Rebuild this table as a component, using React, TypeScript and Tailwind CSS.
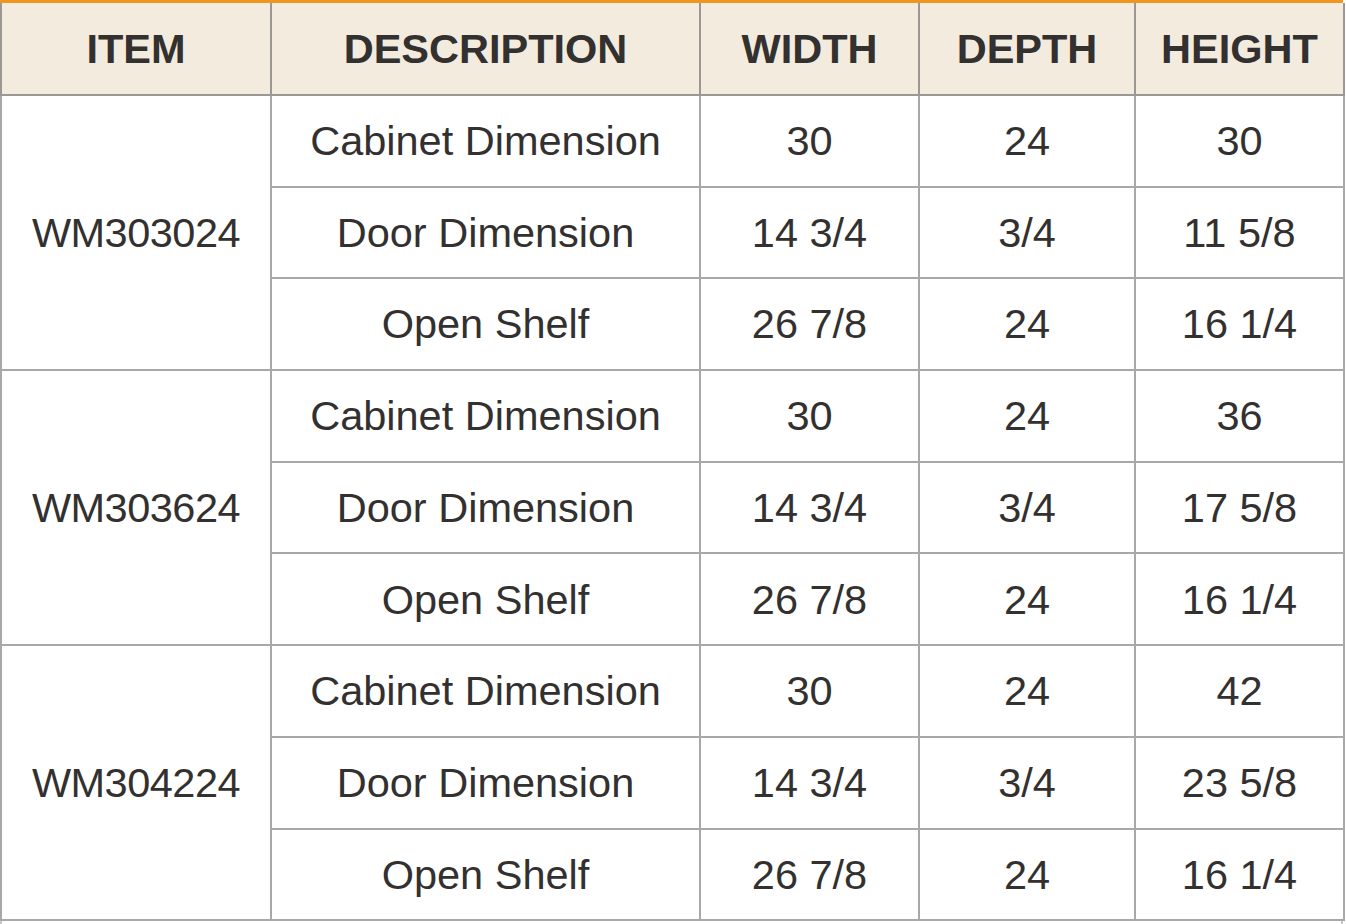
const rows = [
  {
    item: 'WM303024',
    lines: [
      ['Cabinet Dimension', '30', '24', '30'],
      ['Door Dimension', '14 3/4', '3/4', '11 5/8'],
      ['Open Shelf', '26 7/8', '24', '16 1/4'],
    ],
  },
  {
    item: 'WM303624',
    lines: [
      ['Cabinet Dimension', '30', '24', '36'],
      ['Door Dimension', '14 3/4', '3/4', '17 5/8'],
      ['Open Shelf', '26 7/8', '24', '16 1/4'],
    ],
  },
  {
    item: 'WM304224',
    lines: [
      ['Cabinet Dimension', '30', '24', '42'],
      ['Door Dimension', '14 3/4', '3/4', '23 5/8'],
      ['Open Shelf', '26 7/8', '24', '16 1/4'],
    ],
  },
]

const headers = ['ITEM', 'DESCRIPTION', 'WIDTH', 'DEPTH', 'HEIGHT']

export default function App() {
  return (
    <div
      className="w-[1346px] h-[924px] overflow-hidden bg-white text-[#333030]"
      style={{ fontFamily: '"Liberation Sans", Arial, sans-serif' }}
    >
      <div className="w-[1343px] h-[3px] bg-[#f0951f]" />
      <table className="table-fixed border-collapse w-[1343px]">
        <colgroup>
          <col className="w-[270px]" />
          <col className="w-[429px]" />
          <col className="w-[219px]" />
          <col className="w-[216px]" />
          <col className="w-[209px]" />
        </colgroup>
        <thead>
          <tr className="h-[92px] bg-[#f3ebde]">
            {headers.map((h) => (
              <th
                key={h}
                className="border-2 border-t-0 border-[#9a9794] text-[41.5px] font-bold text-center align-middle p-0 leading-none"
              >
                {h}
              </th>
            ))}
          </tr>
        </thead>
        <tbody>
          {rows.map((group) =>
            group.lines.map((line, i) => (
              <tr key={group.item + i} className="h-[91.7px]">
                {i === 0 && (
                  <td
                    rowSpan={3}
                    className="border-2 border-[#a8a8a8] text-[41.5px] text-center align-middle p-0 leading-none tracking-[-0.5px]"
                  >
                    {group.item}
                  </td>
                )}
                {line.map((cell, j) => (
                  <td
                    key={j}
                    className="border-2 border-[#a8a8a8] text-[41.5px] text-center align-middle p-0 leading-none"
                  >
                    {cell}
                  </td>
                ))}
              </tr>
            ))
          )}
        </tbody>
      </table>
      <div className="w-[1343px] h-[10px] border-x-2 border-[#c8c8c8]" />
    </div>
  )
}
